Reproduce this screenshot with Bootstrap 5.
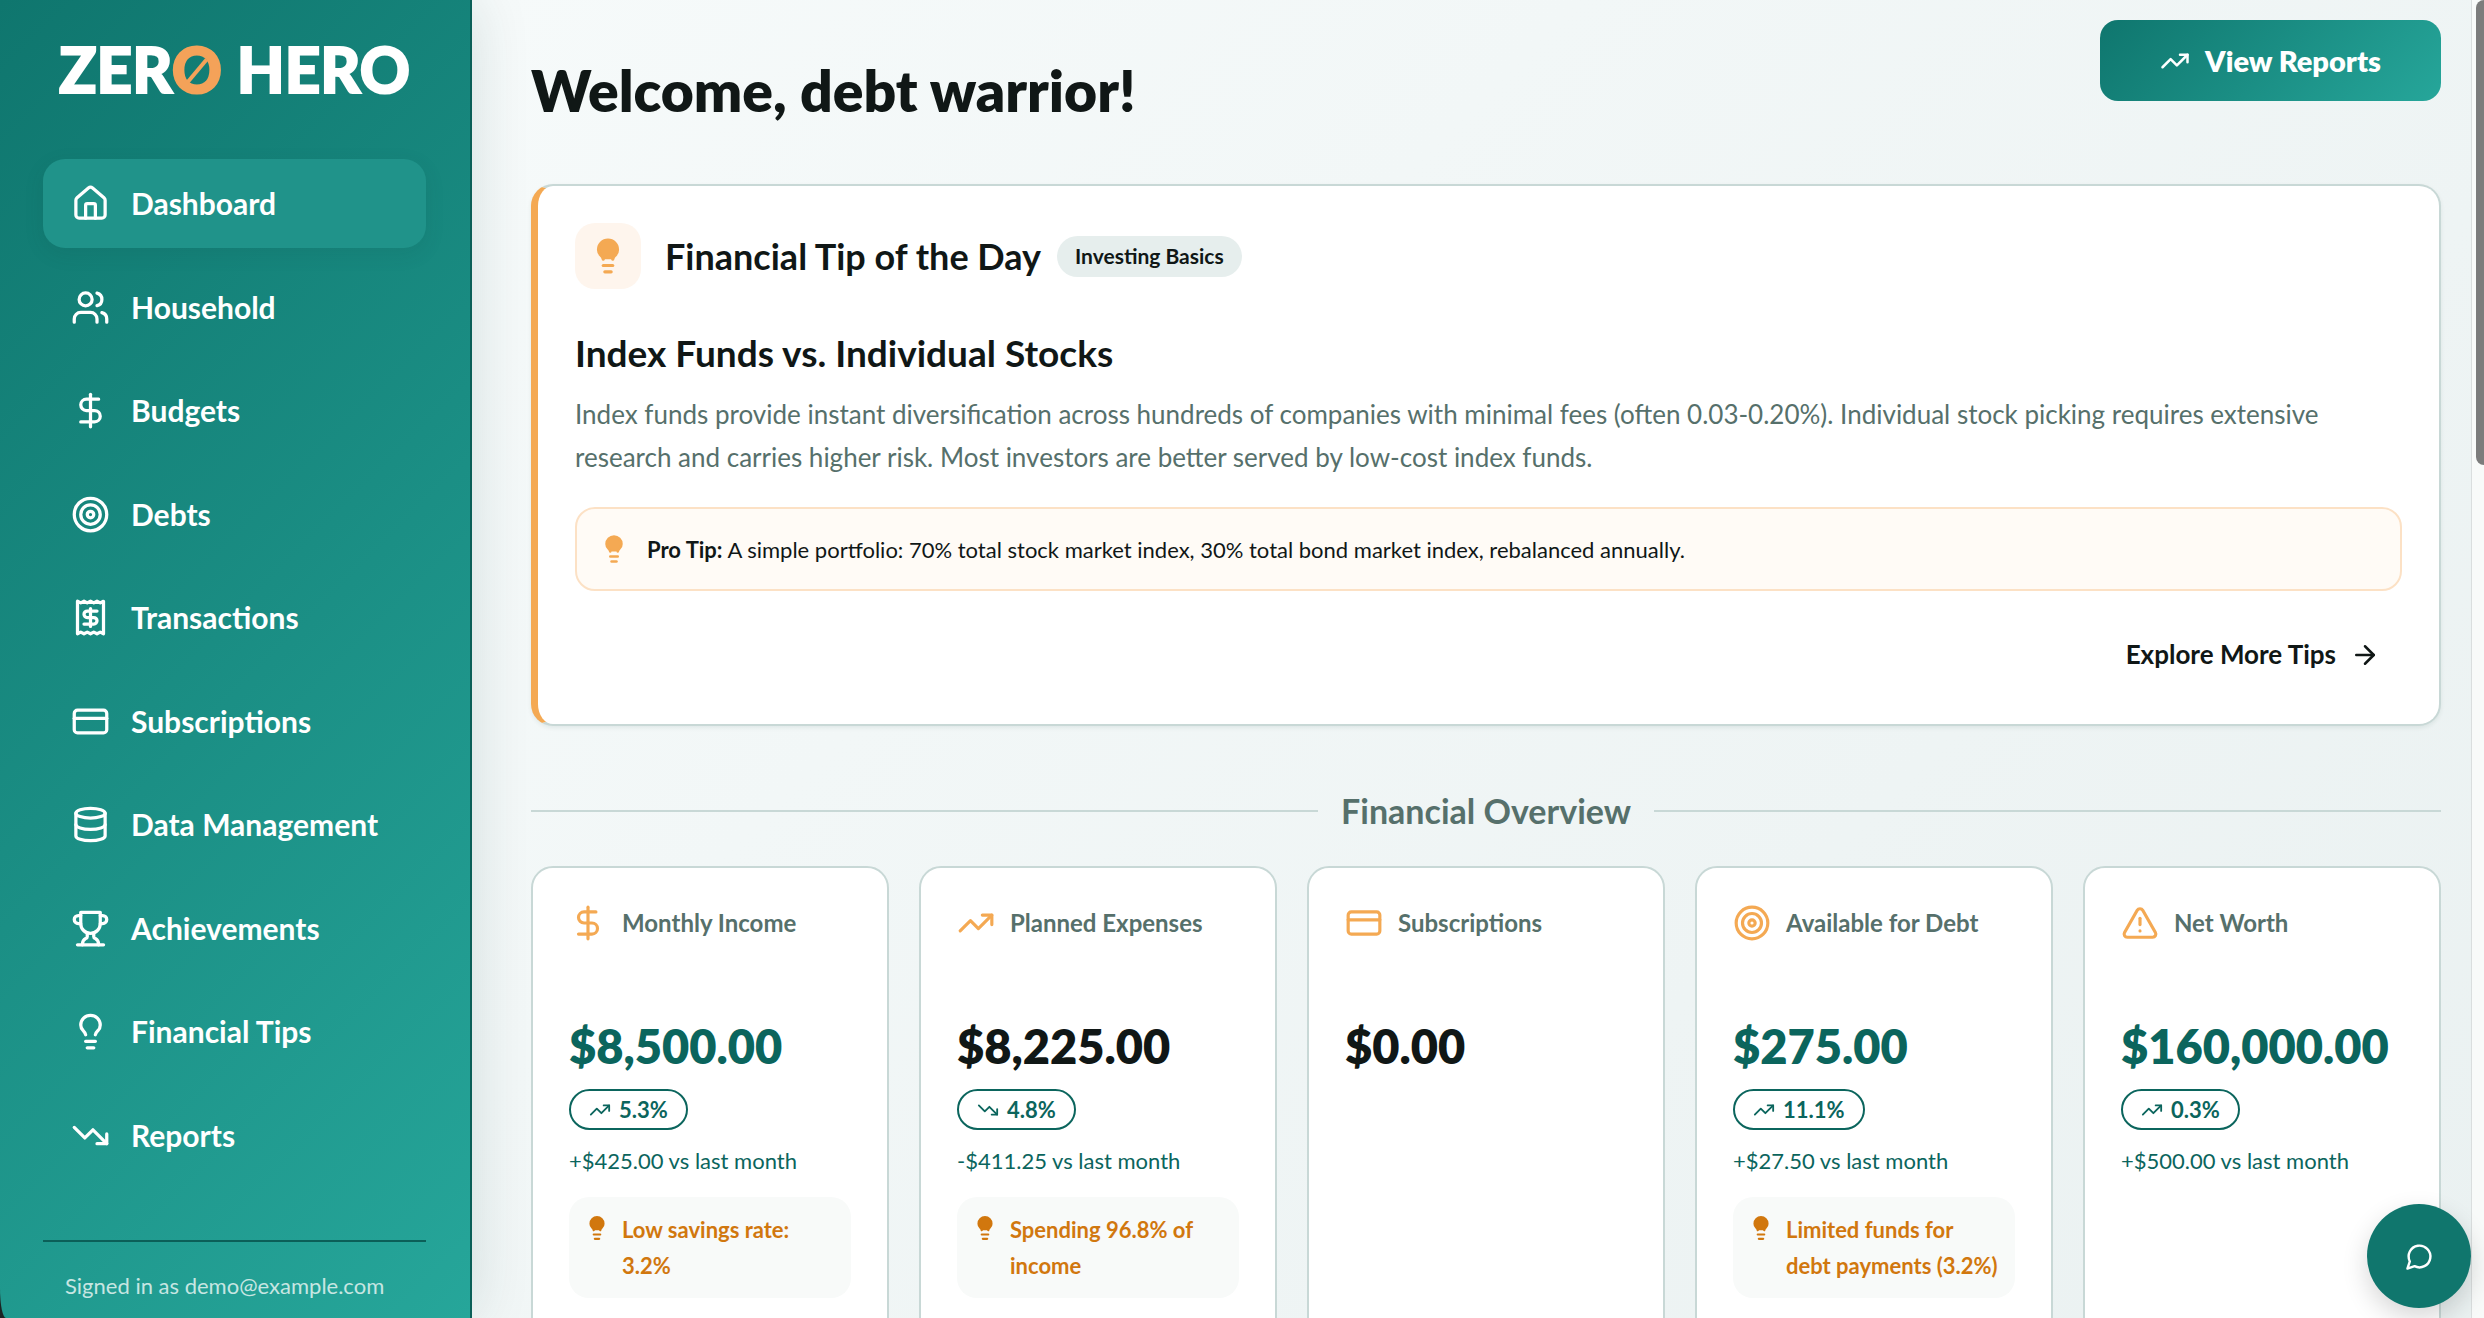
<!DOCTYPE html>
<html lang="en">
<head>
<meta charset="utf-8">
<meta name="viewport" content="width=device-width, initial-scale=1">
<title>Zero Hero – Dashboard</title>
<link href="https://cdn.jsdelivr.net/npm/bootstrap@5.3.0/dist/css/bootstrap.min.css" rel="stylesheet">
<style>
  :root { --teal-dark: #0b655d; --amber: #f4a953; --ink: #101716; --soft: #56706b; --line: #c8d8d6; }
  body { font-family: Lato, "Open Sans", sans-serif; color: var(--ink); background: #1d2423; height: 100vh; overflow: hidden; }
  .ico { fill: none; stroke: currentColor; stroke-width: 2; stroke-linecap: round; stroke-linejoin: round; flex: none; }

  .side { width: 472px; background: linear-gradient(135deg, #0f766e, #26a69a); border-right: 2px solid #0b5f58; padding: 0 44px 0 43px; border-bottom-left-radius: 6px 30px; box-shadow: 0 0 60px rgba(15, 60, 55, .14); z-index: 2; }
  .brand { height: 159px; padding-top: 27px; font-size: 62px; font-weight: 900; line-height: 84px; color: #fff; text-decoration: none; -webkit-text-stroke: 2px currentColor; }
  .brand .zed { color: #f4a259; position: relative; }
  .brand .zed::after { content: ""; position: absolute; left: 50%; top: 50%; width: 4px; height: 30px; margin: -13px 0 0 -2px; background: currentColor; transform: rotate(40deg); }
  .side .nav-link { height: 89px; padding: 0 28px; gap: 21px; border-radius: 22px; color: #fff; font-size: 30px; font-weight: 700; }
  .side .nav-link.active { background: #20938a; box-shadow: 0 6px 20px rgba(15, 60, 55, .1); }
  .side-foot { margin-top: 60px; height: 78px; border-top: 2px solid #0b5f58; padding: 27px 22px 0; font-size: 22px; line-height: 34px; color: #c7e6e2; }

  .page { background: linear-gradient(135deg, #f6fafa, #eaf1f1); padding: 20px 30px 0 59px; border-right: 1px solid #dadede; overflow: hidden; }
  .welcome { font-size: 57px; line-height: 72px; font-weight: 800; margin: 34px 0 0; }
  .btn-report { height: 81px; padding: 0 60px; gap: 15px; border: 0; border-radius: 18px; color: #fff; font-size: 29px; font-weight: 800; background: linear-gradient(135deg, #0f766e, #26a69a); }
  .tip { margin-top: 58px; padding: 37px; background: #fff; border: 2px solid var(--line); border-left: 7px solid var(--amber); border-radius: 22px; box-shadow: 0 2px 4px rgba(15, 60, 55, .08); }
  .tip-icon { width: 66px; height: 66px; border-radius: 20px; background: #fef5ed; color: var(--amber); }
  .tip-title { font-size: 36px; line-height: 44px; font-weight: 700; }
  .tip-tag { padding: 0 18px; height: 41px; border-radius: 21px; background: #e6eeed; font-size: 21px; font-weight: 700; }
  .tip-head { font-size: 37px; line-height: 44px; font-weight: 700; margin: 42px 0 18px; }
  .tip-text { font-size: 26px; line-height: 43px; color: var(--soft); }
  .protip { margin-top: 28px; height: 84px; padding: 0 22px; gap: 18px; border: 2px solid #fce1c5; border-radius: 20px; background: #fffbf6; font-size: 22px; }
  .protip .ico { color: var(--amber); }
  .btn-more { margin: 33px 0 2px; height: 61px; padding: 0 22px; gap: 14px; border: 0; font-size: 26px; font-weight: 700; color: var(--ink); }

  .section-title { margin-top: 60px; gap: 23px; font-size: 34px; line-height: 50px; font-weight: 700; color: var(--soft); }
  .section-title hr { margin: 0; border-top: 2px solid var(--line); opacity: 1; }
  .stats { display: grid; grid-template-columns: repeat(5, 1fr); gap: 30px; margin-top: 30px; }
  .stat { height: 500px; padding: 36px; background: #fff; border: 2px solid var(--line); border-radius: 22px; }
  .stat-label { gap: 15px; margin-bottom: 77px; font-size: 24px; line-height: 38px; font-weight: 700; color: var(--soft); white-space: nowrap; }
  .stat-label .ico { color: var(--amber); }
  .stat-sum { font-size: 47px; line-height: 54px; font-weight: 800; margin-bottom: 16px; }
  .stat-pill { height: 41px; padding: 0 18px; gap: 8px; border: 2px solid var(--teal-dark); border-radius: 21px; font-size: 22px; font-weight: 700; color: var(--teal-dark); }
  .stat-delta { margin-top: 14px; font-size: 22px; line-height: 33px; color: var(--teal-dark); white-space: nowrap; }
  .good { color: var(--teal-dark); }
  .hint { margin-top: 20px; padding: 15px 14px 14px 15px; gap: 12px; border-radius: 20px; background: #f8faf9; color: #d1770e; font-size: 22px; line-height: 36px; font-weight: 700; }
  .hint .ico { margin-top: 3px; }

  .chat { position: absolute; right: 13px; bottom: 10px; width: 104px; height: 104px; border: 0; border-radius: 50%; background: #10766d; color: #fff; box-shadow: 0 10px 26px rgba(0, 0, 0, .16); z-index: 3; }
  .track { width: 12px; padding-left: 4px; background: #f8faf9; }
  .thumb { height: 465px; border-radius: 8px 0 0 8px; background: #7c7c7c; }
</style>
<script src="https://cdn.jsdelivr.net/npm/bootstrap@5.3.0/dist/js/bootstrap.bundle.min.js"></script>
</head>
<body class="d-flex position-relative">

<svg class="d-none" aria-hidden="true">
  <symbol id="i-home" viewBox="0 0 24 24"><path d="M15 21v-8a1 1 0 0 0-1-1h-4a1 1 0 0 0-1 1v8"/><path d="M3 10a2 2 0 0 1 .709-1.528l7-5.999a2 2 0 0 1 2.582 0l7 5.999A2 2 0 0 1 21 10v9a2 2 0 0 1-2 2H5a2 2 0 0 1-2-2z"/></symbol>
  <symbol id="i-users" viewBox="0 0 24 24"><path d="M16 21v-2a4 4 0 0 0-4-4H6a4 4 0 0 0-4 4v2"/><circle cx="9" cy="7" r="4"/><path d="M22 21v-2a4 4 0 0 0-3-3.87"/><path d="M16 3.13a4 4 0 0 1 0 7.75"/></symbol>
  <symbol id="i-dollar" viewBox="0 0 24 24"><path d="M12 2v20"/><path d="M17 5H9.500a3.500 3.500 0 0 0 0 7h5a3.500 3.500 0 0 1 0 7H6"/></symbol>
  <symbol id="i-target" viewBox="0 0 24 24"><circle cx="12" cy="12" r="10"/><circle cx="12" cy="12" r="6"/><circle cx="12" cy="12" r="2"/></symbol>
  <symbol id="i-receipt" viewBox="0 0 24 24"><path d="M4 2v20l2-1 2 1 2-1 2 1 2-1 2 1 2-1 2 1V2l-2 1-2-1-2 1-2-1-2 1-2-1-2 1Z"/><path d="M16 8h-6a2 2 0 1 0 0 4h4a2 2 0 1 1 0 4H8"/><path d="M12 17.500v-11"/></symbol>
  <symbol id="i-card" viewBox="0 0 24 24"><rect x="2" y="5" width="20" height="14" rx="2"/><path d="M2 10h20"/></symbol>
  <symbol id="i-data" viewBox="0 0 24 24"><ellipse cx="12" cy="5" rx="9" ry="3"/><path d="M3 5v14a9 3 0 0 0 18 0V5"/><path d="M3 12a9 3 0 0 0 18 0"/></symbol>
  <symbol id="i-trophy" viewBox="0 0 24 24"><path d="M6 9H4.500a2.500 2.500 0 0 1 0-5H6"/><path d="M18 9h1.500a2.500 2.500 0 0 0 0-5H18"/><path d="M4 22h16"/><path d="M10 14.660V17c0 .55-.47.98-.97 1.210C7.850 18.750 7 20.240 7 22"/><path d="M14 14.660V17c0 .55.47.98.97 1.210C16.150 18.750 17 20.240 17 22"/><path d="M18 2H6v7a6 6 0 0 0 12 0V2Z"/></symbol>
  <symbol id="i-bulb" viewBox="0 0 24 24"><path d="M15 14c.2-1 .7-1.700 1.500-2.500 1-.9 1.500-2.200 1.500-3.500A6 6 0 0 0 6 8c0 1 .2 2.200 1.500 3.500.7.7 1.300 1.500 1.500 2.500"/><path d="M9 18h6"/><path d="M10 22h4"/></symbol>
  <symbol id="i-bulbfill" viewBox="0 0 24 24"><path fill="currentColor" d="M15 14c.2-1 .7-1.700 1.500-2.500 1-.9 1.500-2.200 1.500-3.500A6 6 0 0 0 6 8c0 1 .2 2.200 1.500 3.500.7.7 1.300 1.500 1.500 2.500"/><path d="M9 18h6"/><path d="M10 22h4"/></symbol>
  <symbol id="i-down" viewBox="0 0 24 24"><path d="m22 17-8.500-8.500-5 5L2 7"/><path d="M16 17h6v-6"/></symbol>
  <symbol id="i-up" viewBox="0 0 24 24"><path d="m22 7-8.500 8.500-5-5L2 17"/><path d="M16 7h6v6"/></symbol>
  <symbol id="i-warn" viewBox="0 0 24 24"><path d="m21.730 18-8-14a2 2 0 0 0-3.480 0l-8 14A2 2 0 0 0 4 21h16a2 2 0 0 0 1.730-3"/><path d="M12 9v4"/><path d="M12 17h.01"/></symbol>
  <symbol id="i-arrow" viewBox="0 0 24 24"><path d="M5 12h14"/><path d="m12 5 7 7-7 7"/></symbol>
  <symbol id="i-chat" viewBox="0 0 24 24"><path d="M7.900 20A9 9 0 1 0 4 16.100L2 22Z"/></symbol>
</svg>

<aside class="side d-flex flex-column flex-shrink-0">
  <a href="#" class="brand text-center text-nowrap">ZER<span class="zed">O</span> HERO</a>
  <nav class="nav flex-column flex-nowrap flex-grow-1 justify-content-between">
    <a href="#" class="nav-link active d-flex align-items-center" aria-current="page"><svg class="ico" width="39" height="39"><use href="#i-home"/></svg>Dashboard</a>
    <a href="#" class="nav-link d-flex align-items-center"><svg class="ico" width="39" height="39"><use href="#i-users"/></svg>Household</a>
    <a href="#" class="nav-link d-flex align-items-center"><svg class="ico" width="39" height="39"><use href="#i-dollar"/></svg>Budgets</a>
    <a href="#" class="nav-link d-flex align-items-center"><svg class="ico" width="39" height="39"><use href="#i-target"/></svg>Debts</a>
    <a href="#" class="nav-link d-flex align-items-center"><svg class="ico" width="39" height="39"><use href="#i-receipt"/></svg>Transactions</a>
    <a href="#" class="nav-link d-flex align-items-center"><svg class="ico" width="39" height="39"><use href="#i-card"/></svg>Subscriptions</a>
    <a href="#" class="nav-link d-flex align-items-center"><svg class="ico" width="39" height="39"><use href="#i-data"/></svg>Data Management</a>
    <a href="#" class="nav-link d-flex align-items-center"><svg class="ico" width="39" height="39"><use href="#i-trophy"/></svg>Achievements</a>
    <a href="#" class="nav-link d-flex align-items-center"><svg class="ico" width="39" height="39"><use href="#i-bulb"/></svg>Financial Tips</a>
    <a href="#" class="nav-link d-flex align-items-center"><svg class="ico" width="39" height="39"><use href="#i-down"/></svg>Reports</a>
  </nav>
  <div class="side-foot flex-shrink-0 text-nowrap">Signed in as demo@example.com</div>
</aside>

<main class="page flex-grow-1">
  <header class="d-flex justify-content-between align-items-start">
    <h1 class="welcome">Welcome, debt warrior!</h1>
    <button type="button" class="btn btn-report d-flex align-items-center"><svg class="ico" width="30" height="30"><use href="#i-up"/></svg>View Reports</button>
  </header>

  <section class="tip">
    <div class="d-flex align-items-center">
      <div class="tip-icon d-flex align-items-center justify-content-center me-4"><svg class="ico" width="38" height="38"><use href="#i-bulbfill"/></svg></div>
      <h2 class="tip-title mb-0 me-3">Financial Tip of the Day</h2>
      <span class="tip-tag d-flex align-items-center">Investing Basics</span>
    </div>
    <h3 class="tip-head">Index Funds vs. Individual Stocks</h3>
    <p class="tip-text mb-0">Index funds provide instant diversification across hundreds of companies with minimal fees (often 0.03-0.20%). Individual stock picking requires extensive research and carries higher risk. Most investors are better served by low-cost index funds.</p>
    <div class="protip d-flex align-items-center"><svg class="ico" width="30" height="30"><use href="#i-bulbfill"/></svg><span><strong>Pro Tip:</strong> A simple portfolio: 70% total stock market index, 30% total bond market index, rebalanced annually.</span></div>
    <button type="button" class="btn btn-more d-flex align-items-center ms-auto">Explore More Tips<svg class="ico" width="30" height="30"><use href="#i-arrow"/></svg></button>
  </section>

  <h2 class="section-title d-flex align-items-center mb-0"><hr class="flex-grow-1">Financial Overview<hr class="flex-grow-1"></h2>

  <section class="stats">
    <article class="stat">
      <div class="stat-label d-flex"><svg class="ico" width="38" height="38"><use href="#i-dollar"/></svg>Monthly Income</div>
      <div class="stat-sum good">$8,500.00</div>
      <div class="stat-pill d-inline-flex align-items-center"><svg class="ico" width="22" height="22"><use href="#i-up"/></svg>5.3%</div>
      <div class="stat-delta">+$425.00 vs last month</div>
      <div class="hint d-flex align-items-start"><svg class="ico" width="26" height="26"><use href="#i-bulbfill"/></svg><span>Low savings rate: 3.2%</span></div>
    </article>
    <article class="stat">
      <div class="stat-label d-flex"><svg class="ico" width="38" height="38"><use href="#i-up"/></svg>Planned Expenses</div>
      <div class="stat-sum">$8,225.00</div>
      <div class="stat-pill d-inline-flex align-items-center"><svg class="ico" width="22" height="22"><use href="#i-down"/></svg>4.8%</div>
      <div class="stat-delta">-$411.25 vs last month</div>
      <div class="hint d-flex align-items-start"><svg class="ico" width="26" height="26"><use href="#i-bulbfill"/></svg><span>Spending 96.8% of income</span></div>
    </article>
    <article class="stat">
      <div class="stat-label d-flex"><svg class="ico" width="38" height="38"><use href="#i-card"/></svg>Subscriptions</div>
      <div class="stat-sum">$0.00</div>
    </article>
    <article class="stat">
      <div class="stat-label d-flex"><svg class="ico" width="38" height="38"><use href="#i-target"/></svg>Available for Debt</div>
      <div class="stat-sum good">$275.00</div>
      <div class="stat-pill d-inline-flex align-items-center"><svg class="ico" width="22" height="22"><use href="#i-up"/></svg>11.1%</div>
      <div class="stat-delta">+$27.50 vs last month</div>
      <div class="hint d-flex align-items-start"><svg class="ico" width="26" height="26"><use href="#i-bulbfill"/></svg><span>Limited funds for debt payments (3.2%)</span></div>
    </article>
    <article class="stat">
      <div class="stat-label d-flex"><svg class="ico" width="38" height="38"><use href="#i-warn"/></svg>Net Worth</div>
      <div class="stat-sum good">$160,000.00</div>
      <div class="stat-pill d-inline-flex align-items-center"><svg class="ico" width="22" height="22"><use href="#i-up"/></svg>0.3%</div>
      <div class="stat-delta">+$500.00 vs last month</div>
    </article>
  </section>
</main>

<div class="track flex-shrink-0"><div class="thumb"></div></div>
<button type="button" class="chat d-flex align-items-center justify-content-center" aria-label="Open chat"><svg class="ico" width="29" height="29"><use href="#i-chat"/></svg></button>
</body>
</html>
